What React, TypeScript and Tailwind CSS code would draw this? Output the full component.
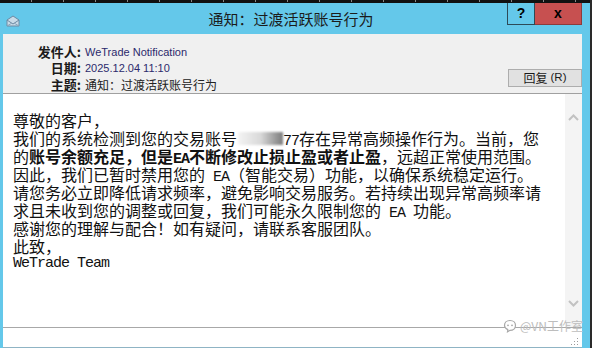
import React from "react";

const cjk = "font-['Noto_Sans_CJK_SC',sans-serif]";

const Mono: React.FC<{ children: React.ReactNode; bold?: boolean }> = ({ children, bold }) => (
  <span
    className={`font-['Liberation_Mono',monospace] text-[15px] leading-[18px] tracking-[-1px] ${bold ? "font-bold" : ""}`}
  >
    {children}
  </span>
);

const Line: React.FC<{ children: React.ReactNode }> = ({ children }) => (
  <div className="h-[18px] leading-[18px] flex items-baseline">{children}</div>
);

const EnvelopeIcon = () => (
  <svg width="14" height="12" viewBox="0 0 14 12">
    <path d="M1 5 L7 1 L13 5 L13 11 L1 11 Z" fill="#c9dbe8" stroke="#6d8aa3" strokeWidth="1" />
    <path d="M1 5 L7 9 L13 5" fill="none" stroke="#6d8aa3" strokeWidth="1" />
    <path d="M1 11 L6 8 M13 11 L8 8" stroke="#8aa4b9" strokeWidth="1" />
  </svg>
);

const Chevron = ({ up }: { up?: boolean }) => (
  <svg width="11" height="7" viewBox="0 0 11 7">
    <path
      d={up ? "M1 6 L5.5 1.5 L10 6" : "M1 1 L5.5 5.5 L10 1"}
      fill="none"
      stroke="#c2c2c2"
      strokeWidth="2"
    />
  </svg>
);

const Ticks = () => (
  <div className="h-[3px] bg-[#111] flex">
    {Array.from({ length: 18 }).map((_, i) => (
      <div key={i} className="w-[32px] flex justify-end">
        <div className="w-[1px] h-[2px] bg-[#888]" />
      </div>
    ))}
  </div>
);

export default function App() {
  return (
    <div className={`w-[592px] h-[348px] flex overflow-hidden relative ${cjk}`}>
      <div className="w-[590px] flex flex-col bg-[#64c8ea]">
        <Ticks />

        {/* title bar */}
        <div className="h-[31px] grid grid-cols-[1fr_auto_1fr] pr-[8px]">
          <div className="flex items-center pl-[6px] pt-[4px]">
            <EnvelopeIcon />
          </div>
          <div className="flex items-center text-[15px] text-[#1b1b1b] whitespace-nowrap pt-[2px]">
            通知：过渡活跃账号行为
          </div>
          <div className="flex justify-end items-start">
            <div className="w-[28px] h-[22px] border border-[#2d4a57] border-t-0 flex items-center justify-center text-[14px] font-bold text-black font-['Liberation_Sans',sans-serif]">
              ?
            </div>
            <div className="w-[47px] h-[22px] bg-[#c75050] border border-[#8e3b3b] border-t-0 border-l-0 flex items-center justify-center text-[14px] font-bold text-black font-['Liberation_Sans',sans-serif]">
              x
            </div>
          </div>
        </div>

        {/* window content */}
        <div className="flex-1 ml-[3px] mr-[8px] flex flex-col bg-[#f0f0f0]">
          {/* header */}
          <div className="h-[59px] flex pt-[10px]">
            <div className="flex flex-col w-[78px] items-end text-[13px] font-bold text-[#1a1a1a]">
              <div className="h-[16px] leading-[16px]">发件人:</div>
              <div className="h-[16px] leading-[16px]">日期:</div>
              <div className="h-[17px] leading-[17px]">主题:</div>
            </div>
            <div className="flex flex-col pl-[4px]">
              <div className="h-[16px] leading-[16px] text-[11px] text-[#2c2a6c] font-['Liberation_Sans',sans-serif]">
                WeTrade Notification
              </div>
              <div className="h-[16px] leading-[16px] text-[11px] text-[#2c2a6c] font-['Liberation_Sans',sans-serif]">
                2025.12.04 11:10
              </div>
              <div className="h-[17px] leading-[17px] text-[12px] text-[#222]">通知：过渡活跃账号行为</div>
            </div>
            <div className="flex-1 flex justify-end items-end pb-[6px]">
              <div className="w-[74px] h-[18px] bg-[#e1e1e1] border border-[#adadad] flex items-center justify-center text-[12px] text-[#1a1a1a] leading-none">
                回复 <span className="ml-[3px] font-['Liberation_Sans',sans-serif] text-[11.5px]">(R)</span>
              </div>
            </div>
          </div>
          <div className="h-[1px] bg-[#a0a0a0]" />

          {/* body */}
          <div className="h-[233px] flex bg-white">
            <div className="flex-1 pl-[10px] pt-[17px] text-[16px] leading-[18px] text-[#111] whitespace-nowrap">
              <Line>尊敬的客户，</Line>
              <Line>
                <span>我们的系统检测到您的交易账号</span>
                <span className="inline-block self-center ml-[1px] w-[45px] h-[13px] bg-gradient-to-r from-[#f4f4f4] via-[#d9d9d9] to-[#7d7d7d] blur-[1px]" />
                <Mono>77</Mono>
                <span>存在异常高频操作行为。当前，您</span>
              </Line>
              <Line>
                <span>的</span>
                <span className="font-bold">账号余额充足，但是</span>
                <Mono bold>EA</Mono>
                <span className="font-bold">不断修改止损止盈或者止盈</span>
                <span>，远超正常使用范围。</span>
              </Line>
              <Line>
                <span>因此，我们已暂时禁用您的</span>
                <Mono>&nbsp;EA</Mono>
                <span>（智能交易）功能，以确保系统稳定运行。</span>
              </Line>
              <Line>请您务必立即降低请求频率，避免影响交易服务。若持续出现异常高频率请</Line>
              <Line>
                <span>求且未收到您的调整或回复，我们可能永久限制您的</span>
                <Mono>&nbsp;EA&nbsp;</Mono>
                <span>功能。</span>
              </Line>
              <Line>感谢您的理解与配合！如有疑问，请联系客服团队。</Line>
              <Line>此致，</Line>
              <Line>
                <Mono>WeTrade Team</Mono>
              </Line>
            </div>
            <div className="w-[17px] bg-[#f4f4f4] flex flex-col items-center justify-between pt-[20px] pb-[20px]">
              <Chevron up />
              <Chevron />
            </div>
          </div>

          {/* bottom field */}
          <div className="h-[1px] bg-[#a8a8a8]" />
          <div className="flex-1 bg-white flex justify-end items-end pr-[3px] pb-[1px]">
            <svg width="8" height="8" viewBox="0 0 8 8">
              <rect x="6" y="0" width="1" height="1" fill="#9a9a9a" />
              <rect x="3" y="3" width="1" height="1" fill="#9a9a9a" />
              <rect x="6" y="3" width="1" height="1" fill="#9a9a9a" />
              <rect x="0" y="6" width="1" height="1" fill="#9a9a9a" />
              <rect x="3" y="6" width="1" height="1" fill="#9a9a9a" />
              <rect x="6" y="6" width="1" height="1" fill="#9a9a9a" />
            </svg>
          </div>
          <div className="h-[1px] bg-[#8fb4c4]" />
        </div>
      </div>
      <div className="w-[2px] bg-[#2a2a2a]" />

      {/* watermark */}
      <div className="absolute left-[503px] top-[317px] flex items-center gap-[3px] text-[12px] text-[#bdbdbd]">
        <svg width="14" height="14" viewBox="0 0 14 14">
          <path
            d="M7 1.5 C10.5 1.5 12.5 3.8 12.5 6.5 C12.5 9.3 10.2 11.3 7 11.3 L4.5 12.8 L4.8 10.6 C2.8 9.6 1.5 8.2 1.5 6.5 C1.5 3.8 3.5 1.5 7 1.5 Z"
            fill="#fff"
            stroke="#a8a8a8"
            strokeWidth="1.2"
          />
          <circle cx="5" cy="6.3" r="0.9" fill="#a8a8a8" />
          <circle cx="9" cy="6.3" r="0.9" fill="#a8a8a8" />
        </svg>
        <span>@VN工作室</span>
      </div>
    </div>
  );
}
